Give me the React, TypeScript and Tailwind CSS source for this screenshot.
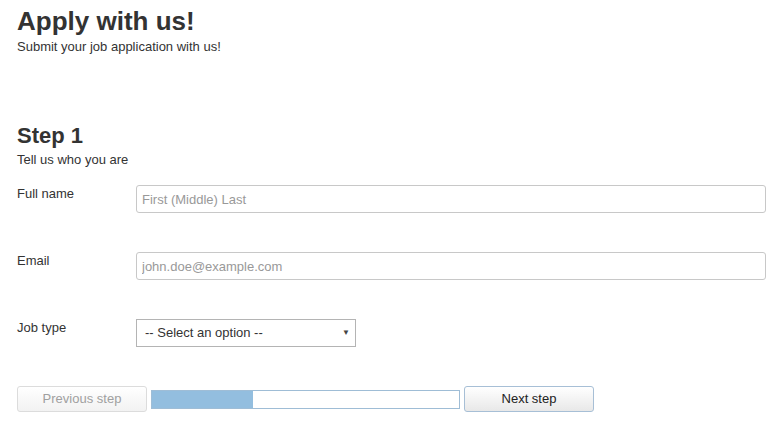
import { useState } from "react"

function Field({ label, children }: { label: string; children: React.ReactNode }) {
    return (
        <div className="flex items-start">
            <label className="w-[119px] shrink-0 pt-[1px] text-[13px] leading-[16px] text-[#333]">{label}</label>
            {children}
        </div>
    )
}

export default function App() {
    const [name, setName] = useState("")
    const [email, setEmail] = useState("")
    const [job, setJob] = useState("")

    return (
        <div className="min-h-[423px] bg-white pl-[17px] pr-[15px] pt-[5px] text-[#333]" style={{ fontFamily: '"Liberation Sans", Arial, sans-serif' }}>
            <h1 className="text-[26px] font-bold leading-[32px]">Apply with us!</h1>
            <p className="mt-[2px] text-[13px] leading-[16px]">Submit your job application with us!</p>

            <h2 className="mt-[69px] text-[22px] font-bold leading-[24px]">Step 1</h2>
            <p className="mt-[4px] text-[13px] leading-[16px]">Tell us who you are</p>

            <div className="mt-[17px] flex flex-col gap-[39px]">
                <Field label="Full name">
                    <input
                        value={name}
                        onChange={e => setName(e.target.value)}
                        placeholder="First (Middle) Last"
                        className="h-[28px] flex-1 rounded-[3px] border border-[#c8c8c8] px-[5px] text-[13px] text-[#333] outline-none placeholder:text-[#999]"
                    />
                </Field>
                <Field label="Email">
                    <input
                        value={email}
                        onChange={e => setEmail(e.target.value)}
                        placeholder="john.doe@example.com"
                        className="h-[28px] flex-1 rounded-[3px] border border-[#c8c8c8] px-[5px] text-[13px] text-[#333] outline-none placeholder:text-[#999]"
                    />
                </Field>
                <Field label="Job type">
                    <div className="relative h-[28px] w-[220px]">
                        <select
                            value={job}
                            onChange={e => setJob(e.target.value)}
                            className="h-full w-full appearance-none border border-[#b4b4b4] bg-white pl-[8px] text-[13px] text-[#333] outline-none"
                        >
                            <option value="">-- Select an option --</option>
                            <option value="full">Full time</option>
                            <option value="part">Part time</option>
                        </select>
                        <span className="pointer-events-none absolute right-[6px] top-[9px] text-[8px] leading-[10px] text-[#444]">▼</span>
                    </div>
                </Field>
            </div>

            <div className="mt-[39px] flex items-center gap-[4px]">
                <button
                    type="button"
                    disabled
                    className="h-[26px] w-[130px] rounded-[3px] border border-[#dcdcdc] bg-gradient-to-b from-white to-[#f2f2f2] text-[13px] text-[#a0a0a0]"
                >
                    Previous step
                </button>
                <div className="h-[19px] w-[309px] border border-[#9fbdd6] bg-white">
                    <div className="h-full w-[33%] bg-[#93bedf]" />
                </div>
                <button
                    type="button"
                    className="h-[26px] w-[130px] rounded-[3px] border border-[#a7bfd6] bg-gradient-to-b from-white to-[#e8e8e8] text-[13px] text-[#222]"
                >
                    Next step
                </button>
            </div>
        </div>
    )
}
